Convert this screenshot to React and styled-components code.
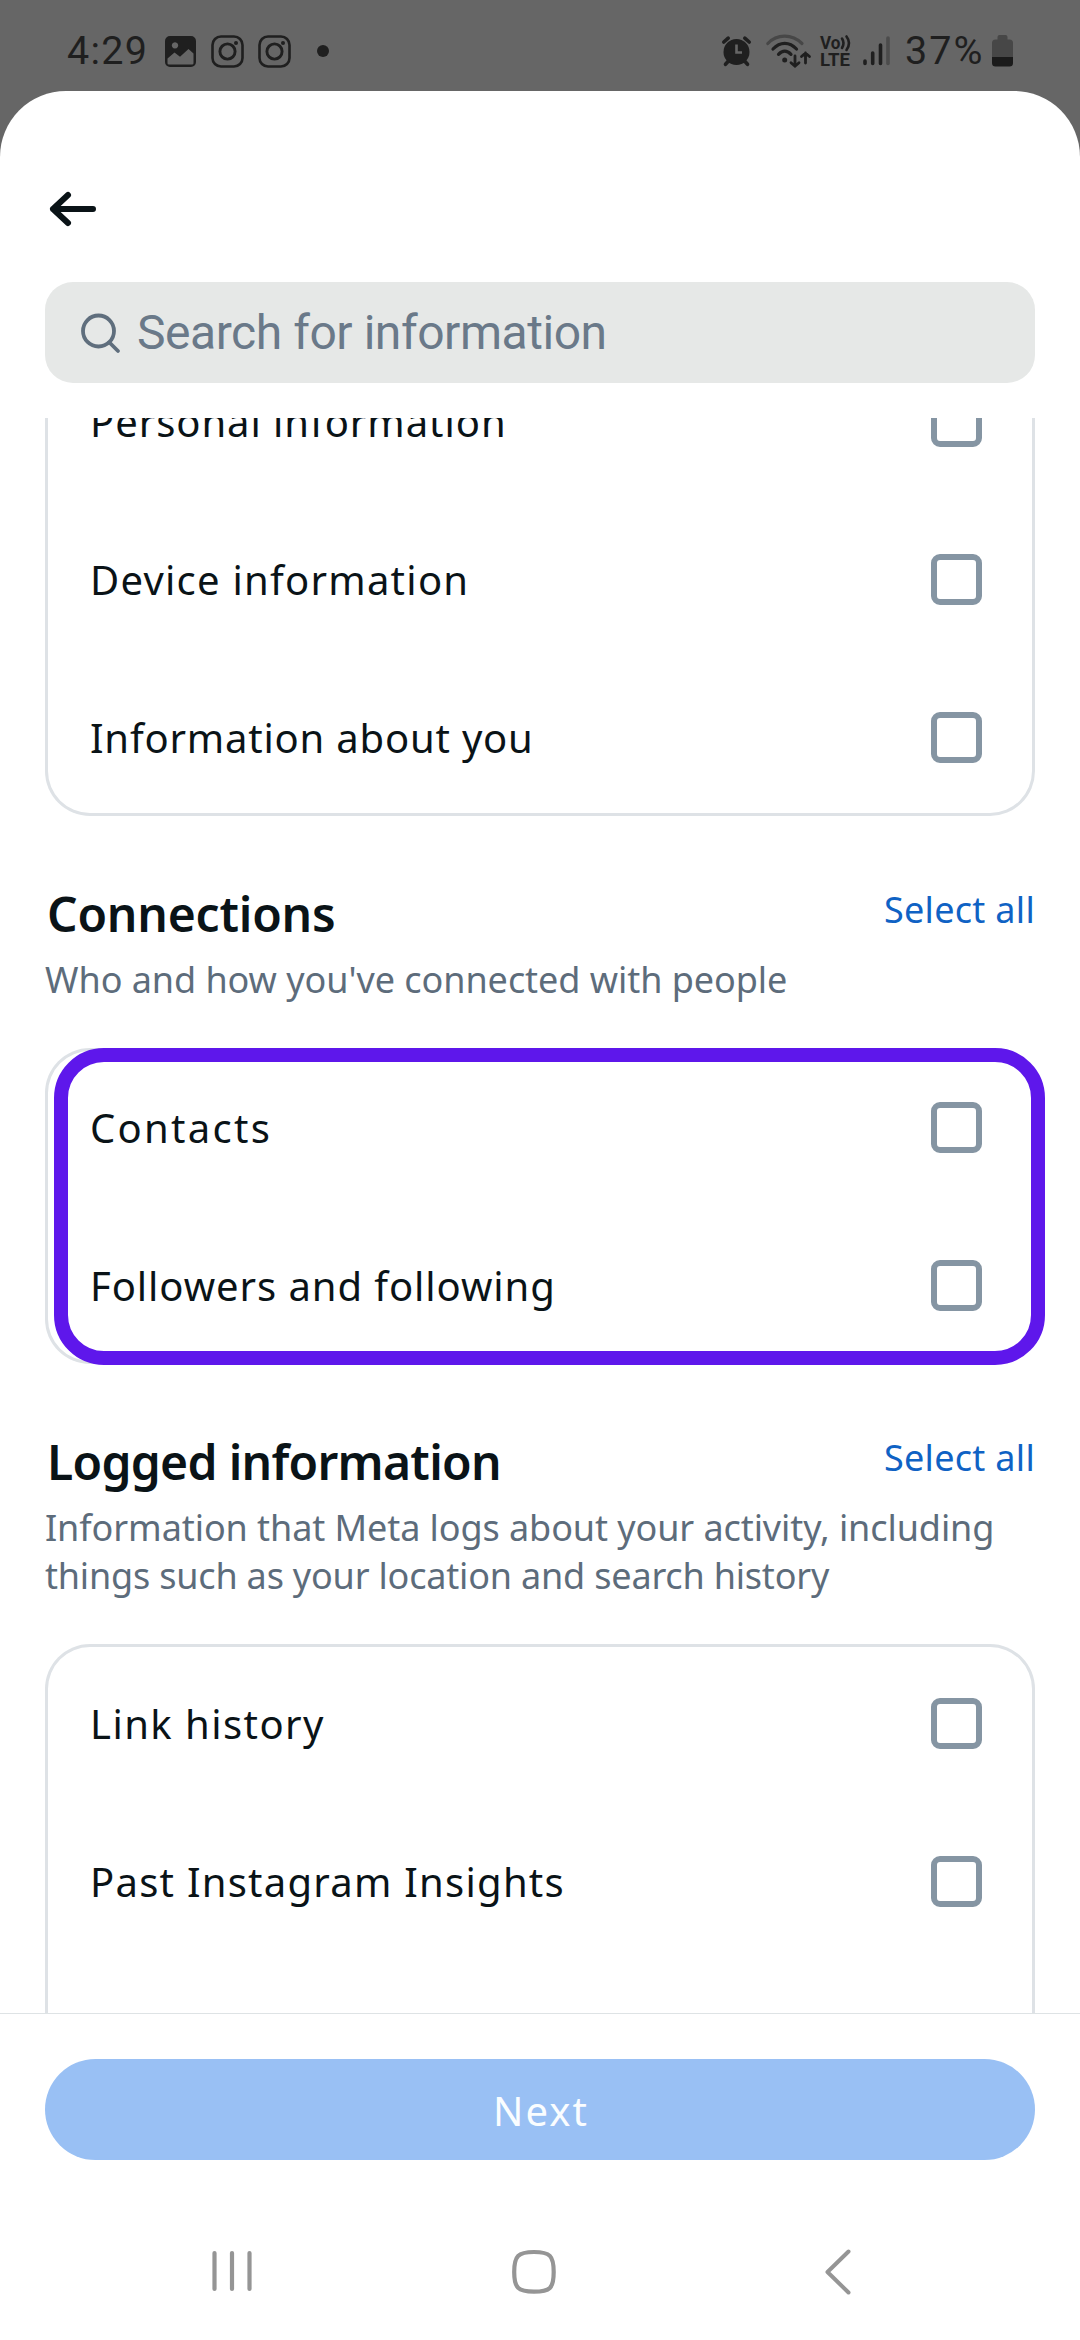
import React from "react";
import styled, { createGlobalStyle } from "styled-components";

const GlobalStyle = createGlobalStyle`
  * { box-sizing: border-box; }
  html, body { margin: 0; padding: 0; background: #666666; }
  body { font-family: "Noto Sans", "Open Sans", sans-serif; color: #0a1317; }
`;

const Screen = styled.div`
  width: 1080px;
  height: 2340px;
  display: flex;
  flex-direction: column;
  background: #666666;
  overflow: hidden;
`;

const StatusBar = styled.header`
  flex: none;
  height: 91px;
  padding: 11px 67px 0;
  display: flex;
  align-items: center;
  justify-content: space-between;
  color: #1f1f1f;
`;

const StatusGroup = styled.div`
  display: flex;
  align-items: center;
  height: 80px;
`;

const StatusIcon = styled.svg`
  display: block;
  flex: none;
  overflow: visible;
  margin-left: ${(p) => p.$gap || 0}px;
`;

const StatusText = styled.span`
  width: ${(p) => p.$width}px;
  margin-left: ${(p) => p.$gap || 0}px;
  font-family: Roboto, sans-serif;
  font-size: 39.5px;
  line-height: 46px;
  letter-spacing: ${(p) => p.$track}px;
  white-space: nowrap;
`;

const Sheet = styled.main`
  flex: 1;
  min-height: 0;
  display: flex;
  flex-direction: column;
  background: #ffffff;
  border-radius: 66px 66px 0 0;
  overflow: hidden;
`;

const TopBar = styled.div`
  flex: none;
  height: 191px;
  padding: 95px 0 0 45px;
`;

const BackButton = styled.button`
  display: block;
  width: 54px;
  height: 46px;
  padding: 0;
  border: 0;
  background: none;
`;

const SearchField = styled.div`
  flex: none;
  height: 101px;
  margin: 0 45px 35px;
  padding-left: 35px;
  display: flex;
  align-items: center;
  gap: 14px;
  border-radius: 28px;
  background: #e6e8e7;
`;

const Placeholder = styled.span`
  font-family: Roboto, sans-serif;
  font-size: 48px;
  line-height: 56px;
  letter-spacing: -0.45px;
  color: #6a7989;
  white-space: nowrap;
`;

const ListArea = styled.div`
  flex: 1;
  min-height: 0;
  padding: 0 45px;
  overflow: hidden;
`;

const Card = styled.div`
  position: relative;
  border-radius: 45px;
  box-shadow: inset 0 0 0 3px #dee2e6;
  margin-top: ${(p) => (p.$scrolled ? "-234px" : "0")};
`;

const Row = styled.label`
  height: 158px;
  padding: 0 53px 0 45px;
  display: flex;
  align-items: center;
  justify-content: space-between;
`;

const RowLabel = styled.span`
  font-size: 40px;
  line-height: 56px;
  padding-top: 1px;
  letter-spacing: ${(p) => p.$track}px;
  white-space: nowrap;
`;

const Checkbox = styled.span`
  width: 51px;
  height: 51px;
  border: 6px solid #8595a3;
  border-radius: 9px;
`;

const SectionHead = styled.div`
  padding: 68px 0 44px;
`;

const TitleRow = styled.div`
  display: flex;
  justify-content: space-between;
  align-items: flex-start;
  height: 72px;
`;

const Title = styled.h2`
  margin: 0 0 0 2px;
  font-size: 48px;
  line-height: 60px;
  font-weight: 600;
  letter-spacing: ${(p) => p.$track}px;
  white-space: nowrap;
`;

const SelectAll = styled.a`
  margin-top: 1px;
  font-size: 36px;
  line-height: 50px;
  letter-spacing: 0.3px;
  color: #0f62c4;
  white-space: nowrap;
`;

const Subtitle = styled.p`
  margin: 0;
  font-size: 36px;
  line-height: 48px;
  color: #5d6c7b;
`;

const SubtitleLine = styled.span`
  display: block;
  letter-spacing: ${(p) => p.$track}px;
  white-space: nowrap;
`;

const Highlight = styled.div`
  position: absolute;
  top: 0;
  left: 9px;
  width: 991px;
  height: 317px;
  border: 14px solid #5e17eb;
  border-radius: 50px;
`;

const Footer = styled.footer`
  flex: none;
  height: 193px;
  padding: 45px 45px 0;
  border-top: 1px solid #dee3e5;
`;

const NextButton = styled.button`
  display: block;
  width: 100%;
  height: 101px;
  padding: 1px 0 0 2px;
  border: 0;
  border-radius: 51px;
  background: #99c0f4;
  color: #fafdff;
  font-family: "Noto Sans", sans-serif;
  font-size: 40px;
  letter-spacing: 2px;
`;

const NavBar = styled.nav`
  flex: none;
  height: 134px;
  padding: 42px 0 0 210px;
  display: flex;
  align-items: flex-start;
  gap: 256px;

  svg:last-child {
    margin-left: 9px;
  }
`;

const InstagramGlyph = ({ gap }) => (
  <StatusIcon $gap={gap} width="33" height="33" viewBox="0 0 33 33" fill="none" stroke="#1f1f1f">
    <rect x="1.5" y="1.5" width="30" height="30" rx="8.5" strokeWidth="2.6" />
    <circle cx="16.5" cy="16.5" r="7.6" strokeWidth="2.9" />
    <circle cx="25" cy="7.9" r="2" fill="#1f1f1f" stroke="none" />
  </StatusIcon>
);

function StatusLine() {
  return (
    <StatusBar>
      <StatusGroup>
        <StatusText $width={83} $track={1.3}>4:29</StatusText>
        <StatusIcon $gap={15} width="31" height="31" viewBox="0 0 31 31">
          <path
            fillRule="evenodd"
            fill="#1f1f1f"
            d="M5 0h21a5 5 0 0 1 5 5v21a5 5 0 0 1-5 5H5a5 5 0 0 1-5-5V5a5 5 0 0 1 5-5zM10 6.200a3.200 3.200 0 1 0 .01 0zM2.500 22.500V27.200q0 1.300 1.300 1.300H27.200q1.300 0 1.300-1.300V17.500L23.500 13 15 20.800 9.500 16.500z"
          />
        </StatusIcon>
        <InstagramGlyph gap={15} />
        <InstagramGlyph gap={14} />
        <StatusIcon $gap={26} width="12" height="12" viewBox="0 0 12 12">
          <circle cx="6" cy="6" r="6" fill="#1f1f1f" />
        </StatusIcon>
      </StatusGroup>
      <StatusGroup>
        <StatusIcon width="29" height="30" viewBox="0 0 29 30" fill="none" stroke="#1f1f1f" strokeLinecap="round">
          <circle cx="14.500" cy="16" r="13" fill="#1f1f1f" stroke="none" />
          <path d="M1.800 6 6.200 2.200M27.200 6 22.800 2.200M6 25.500 3.500 28.300M23 25.500 25.500 28.300" strokeWidth="3.600" />
          <path d="M14.500 8.500V16.500H20" stroke="#666666" strokeWidth="2.600" strokeLinecap="butt" />
        </StatusIcon>
        <StatusIcon $gap={15} width="45" height="34" viewBox="0 0 45 34" fill="none" stroke="#1f1f1f" strokeWidth="3.200" strokeLinecap="round">
          <path d="M1.800 9.500C11-.3 26-.3 36 9.500" stroke="#474747" />
          <path d="M7 15C14 7.500 23.500 7.500 30.500 15M12.500 20.300C16.500 16 21 16 25 20.300" />
          <circle cx="18.700" cy="26" r="2.500" fill="#1f1f1f" stroke="none" />
          <path d="M29 22V32M25 28.700 29 32.200 33 28.700M39.500 29V19M35.500 22.500 39.500 19 43.500 22.500" strokeWidth="2.800" />
        </StatusIcon>
        <StatusIcon $gap={9} width="31" height="32" viewBox="0 0 31 32" fill="#1f1f1f" fontFamily="Roboto, sans-serif" fontWeight="700" fontSize="17.800">
          <text x="0" y="14" textLength="20.500" lengthAdjust="spacingAndGlyphs">Vo</text>
          <text x="0" y="31" textLength="30" lengthAdjust="spacingAndGlyphs">LTE</text>
          <path d="M22 3.500Q25 8 22 13M26.500 1.500Q31.500 8 26.500 15" fill="none" stroke="#1f1f1f" strokeWidth="2.600" strokeLinecap="round" />
        </StatusIcon>
        <StatusIcon $gap={12} width="27" height="30" viewBox="0 0 27 30" stroke="#1f1f1f" strokeWidth="3.600" strokeLinecap="round">
          <path d="M2 25V27.500M9.700 17V27.500M17.500 9V27.500" />
          <path d="M25 2V27.500" stroke="#4c4c4c" />
        </StatusIcon>
        <StatusText $gap={15} $width={79} $track={2}>37%</StatusText>
        <StatusIcon $gap={8} width="21" height="32" viewBox="0 0 21 32">
          <path d="M7.500 0h6q2 0 2 2v2.500h2q3.500 0 3.500 3.500V22H0V8q0-3.500 3.500-3.500h2V2q0-2 2-2z" fill="#474747" />
          <path d="M0 22H21v6q0 3.500-3.500 3.500h-14Q0 31.500 0 28z" fill="#1b1b1b" />
        </StatusIcon>
      </StatusGroup>
    </StatusBar>
  );
}

const Option = ({ label, track }) => (
  <Row>
    <RowLabel $track={track}>{label}</RowLabel>
    <Checkbox />
  </Row>
);

const Section = ({ title, track, lines }) => (
  <SectionHead>
    <TitleRow>
      <Title $track={track}>{title}</Title>
      <SelectAll>Select all</SelectAll>
    </TitleRow>
    <Subtitle>
      {lines.map((line) => (
        <SubtitleLine key={line.text} $track={line.track}>
          {line.text}
        </SubtitleLine>
      ))}
    </Subtitle>
  </SectionHead>
);

export default function App() {
  return (
    <Screen>
      <GlobalStyle />
      <StatusLine />
      <Sheet>
        <TopBar>
          <BackButton aria-label="Back">
            <svg width="54" height="46" viewBox="0 0 54 46" fill="none" stroke="#0a1317" strokeWidth="6" strokeLinecap="round" strokeLinejoin="round">
              <path d="M48 23H8M23 9 8 23 23 37" />
            </svg>
          </BackButton>
        </TopBar>
        <SearchField>
          <svg width="43" height="43" viewBox="0 0 43 43" fill="none" stroke="#5f6e7d" strokeWidth="3.800" strokeLinecap="round">
            <circle cx="18.500" cy="20" r="15.500" />
            <path d="M29.500 31.500 38 40" />
          </svg>
          <Placeholder>Search for information</Placeholder>
        </SearchField>
        <ListArea>
          <Card $scrolled>
            <Row />
            <Option label="Personal information" track={0.95} />
            <Option label="Device information" track={1.25} />
            <Option label="Information about you" track={0.8} />
          </Card>
          <Section
            title="Connections"
            track={-0.2}
            lines={[{ text: "Who and how you've connected with people", track: -0.05 }]}
          />
          <Card>
            <Option label="Contacts" track={2.3} />
            <Option label="Followers and following" track={0.93} />
            <Highlight />
          </Card>
          <Section
            title="Logged information"
            track={-0.7}
            lines={[
              { text: "Information that Meta logs about your activity, including", track: -0.08 },
              { text: "things such as your location and search history", track: -0.19 },
            ]}
          />
          <Card>
            <Option label="Link history" track={1.45} />
            <Option label="Past Instagram Insights" track={1.25} />
            <Row />
          </Card>
        </ListArea>
        <Footer>
          <NextButton>Next</NextButton>
        </Footer>
        <NavBar>
          <svg width="44" height="48" viewBox="0 0 44 48" stroke="#959595" strokeWidth="4.200" strokeLinecap="round">
            <path d="M4.500 5V41M22 5V41M39.500 5V41" />
          </svg>
          <svg width="48" height="48" viewBox="0 0 48 48" fill="none" stroke="#959595" strokeWidth="4.200">
            <path d="M24 4C40 4 43.700 7.700 43.700 24S40 43.700 24 43.700 4.200 40 4.200 24 8 4 24 4z" />
          </svg>
          <svg width="30" height="48" viewBox="0 0 30 48" fill="none" stroke="#959595" strokeWidth="4" strokeLinecap="round" strokeLinejoin="round">
            <path d="M25.500 3.500 4.500 24 25.500 44.500" />
          </svg>
        </NavBar>
      </Sheet>
    </Screen>
  );
}
